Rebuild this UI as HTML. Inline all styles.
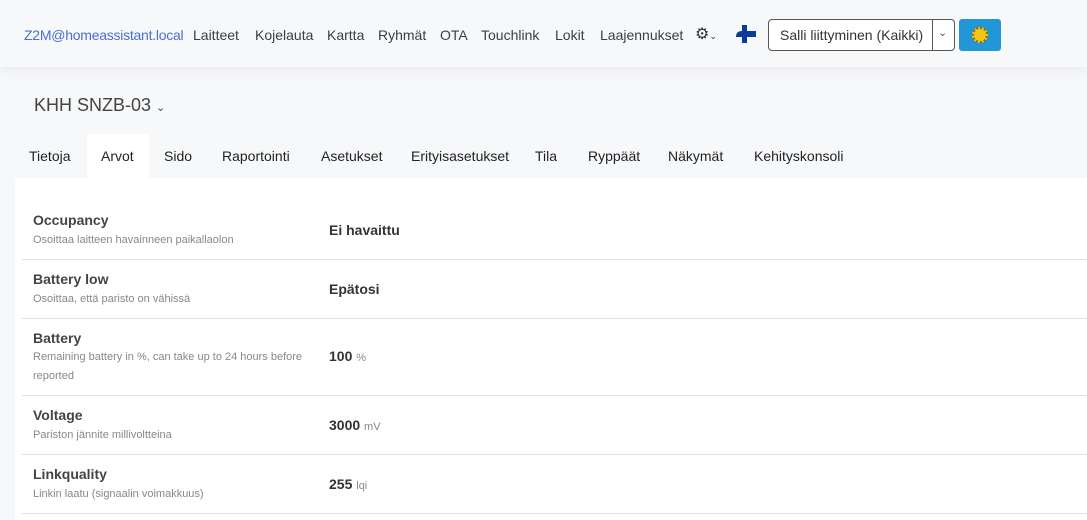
<!DOCTYPE html>
<html><head><meta charset="utf-8"><style>
*{box-sizing:border-box;margin:0;padding:0}
body{width:1087px;height:520px;overflow:hidden;background:#f7f8fa;font-family:"Liberation Sans",sans-serif;color:#212529;position:relative}
.nav{position:absolute;left:0;top:0;width:1087px;height:67px;background:#f7f8fa;box-shadow:0 4px 10px rgba(0,0,0,.06)}
.nav span{position:absolute;top:27px;font-size:14px;color:#3a3f44}
.nav span.brand{color:#4a6fd0;font-size:14px;letter-spacing:-0.25px}
.sel{position:absolute;left:768px;top:19px;width:187px;height:32px;border:1px solid #555;border-radius:4px;background:#fff}
.sel .t{position:absolute;left:11px;top:7px;font-size:14px;color:#333}
.sel .d{position:absolute;left:163px;top:0;width:1px;height:30px;background:#555}
.btn{position:absolute;left:959px;top:19px;width:42px;height:32px;background:#2296d6;border-radius:3px}
h1{position:absolute;left:34px;top:95px;font-size:18px;font-weight:normal;color:#444}
.tab{position:absolute;top:148px;font-size:14px;color:#222}
.act{position:absolute;left:87px;top:134px;width:62px;height:46px;background:#fff}
.card{position:absolute;left:15px;top:178px;width:1072px;height:342px;background:#fff}
.row{position:absolute;left:22px;width:1065px;border-bottom:1px solid #dee2e6}
.n{position:absolute;left:11px;font-size:14px;font-weight:bold;color:#444}
.ds{position:absolute;left:11px;font-size:11px;color:#888;line-height:19px;width:285px}
.v{position:absolute;left:307px;font-size:14px;font-weight:bold;color:#333}
.v small{font-weight:normal;font-size:11px;color:#888}
</style></head><body>
<div class="nav">
<span class="brand" style="left:24px">Z2M@homeassistant.local</span>
<span style="left:193px">Laitteet</span><span style="left:255px">Kojelauta</span><span style="left:327px">Kartta</span><span style="left:378px">Ryhmät</span><span style="left:440px">OTA</span><span style="left:481px">Touchlink</span><span style="left:555px">Lokit</span><span style="left:600px">Laajennukset</span>
<span style="left:695px;top:24px;font-size:16px;color:#333">⚙<small style="font-size:9px">⌄</small></span>
<svg style="position:absolute;left:736px;top:25px" width="20" height="18"><path d="M6 0h5v6h9v6h-9v6h-5v-6H0q0-6 6-6z" fill="#0a3c9e"/></svg>
<div class="sel"><div class="t">Salli liittyminen (Kaikki)</div><div class="d"></div><div style="position:absolute;left:169px;top:6px;font-size:11px;color:#555">⌄</div></div>
<div class="btn"><div style="position:absolute;left:13px;top:8px;width:16px;height:16px;border-radius:50%;background:#f5c518;border:2px dotted #8a6d00"></div></div>
</div>
<h1>KHH SNZB-03 <span style="font-size:11px">⌄</span></h1>
<div class="act"></div>
<span class="tab" style="left:29px">Tietoja</span><span class="tab" style="left:101px">Arvot</span><span class="tab" style="left:164px">Sido</span><span class="tab" style="left:222px">Raportointi</span><span class="tab" style="left:321px">Asetukset</span><span class="tab" style="left:411px">Erityisasetukset</span><span class="tab" style="left:535px">Tila</span><span class="tab" style="left:588px">Ryppäät</span><span class="tab" style="left:668px">Näkymät</span><span class="tab" style="left:754px">Kehityskonsoli</span>
<div class="card"></div>
<div class="row" style="top:200px;height:60px"><div class="n" style="top:12px">Occupancy</div><div class="ds" style="top:31px">Osoittaa laitteen havainneen paikallaolon</div><div class="v" style="top:22px">Ei havaittu</div></div>
<div class="row" style="top:260px;height:59px"><div class="n" style="top:11px">Battery low</div><div class="ds" style="top:30px">Osoittaa, että paristo on vähissä</div><div class="v" style="top:21px">Epätosi</div></div>
<div class="row" style="top:319px;height:77px"><div class="n" style="top:11px">Battery</div><div class="ds" style="top:29px">Remaining battery in %, can take up to 24 hours before reported</div><div class="v" style="top:29px">100 <small>%</small></div></div>
<div class="row" style="top:396px;height:59px"><div class="n" style="top:11px">Voltage</div><div class="ds" style="top:30px">Pariston jännite millivoltteina</div><div class="v" style="top:21px">3000 <small>mV</small></div></div>
<div class="row" style="top:455px;height:59px"><div class="n" style="top:11px">Linkquality</div><div class="ds" style="top:30px">Linkin laatu (signaalin voimakkuus)</div><div class="v" style="top:21px">255 <small>lqi</small></div></div>
</body></html>
